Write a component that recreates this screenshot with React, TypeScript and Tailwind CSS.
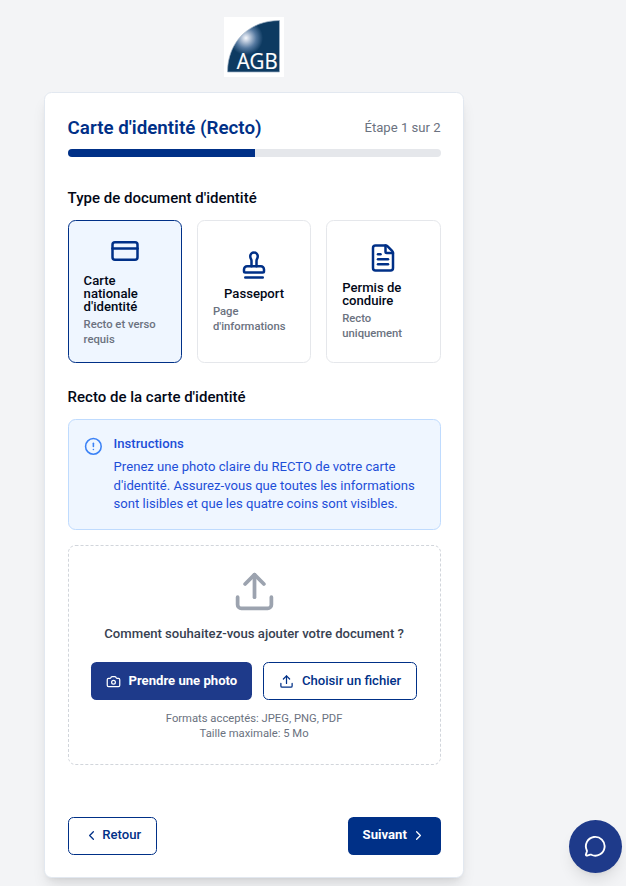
import React from "react";
import {
  Camera,
  ChevronLeft,
  ChevronRight,
  CircleAlert,
  CreditCard,
  FileText,
  MessageCircle,
  Stamp,
  Upload,
  type LucideIcon,
} from "lucide-react";

type DocType = { icon: LucideIcon; title: string; detail: string; selected?: boolean };

const docTypes: DocType[] = [
  { icon: CreditCard, title: "Carte nationale d'identité", detail: "Recto et verso requis", selected: true },
  { icon: Stamp, title: "Passeport", detail: "Page d'informations" },
  { icon: FileText, title: "Permis de conduire", detail: "Recto uniquement" },
];

function Logo() {
  return (
    <svg width="60" height="60" viewBox="0 0 60 60" role="img" aria-label="AGB">
      <defs>
        <radialGradient id="glow" gradientUnits="userSpaceOnUse" cx="22" cy="21" r="17">
          <stop offset="0" stopColor="#f5f8fc" />
          <stop offset="0.2" stopColor="#c3cfe0" />
          <stop offset="0.6" stopColor="#54789f" />
          <stop offset="1" stopColor="#0d3a61" />
        </radialGradient>
      </defs>
      <rect width="60" height="60" fill="#fff" />
      <path d="M55.5 3.5V55H3.5C3.5 25 25 3.5 55.5 3.5Z" fill="url(#glow)" stroke="#9fb1c6" strokeWidth="0.7" />
      <text x="12.7" y="52" fill="#fff" stroke="#fff" strokeWidth="0.2" fontSize="22" textLength="41" lengthAdjust="spacingAndGlyphs" fontFamily="'Open Sans', sans-serif">
        AGB
      </text>
    </svg>
  );
}

function DocCard({ icon: Icon, title, detail, selected }: DocType) {
  return (
    <button
      className={`flex flex-col items-center justify-center rounded-[7.5px] border p-4 text-left ${
        selected ? "border-[#003087] bg-[#eff6ff]" : "border-[#e5e7eb] bg-white"
      }`}
    >
      <Icon size={30} className="mb-2 shrink-0 text-[#003087]" />
      <span className="text-[13.125px] leading-none font-medium text-[#020817]">{title}</span>
      <span className="mt-1 text-[11.25px] leading-[15px] font-medium text-[#6b7280]">{detail}</span>
    </button>
  );
}

export default function App() {
  return (
    <div className="h-[886px] overflow-hidden bg-[#f3f4f6] pl-[44.1px] text-[13.125px] leading-[18.75px] antialiased [--spacing:3.75px] font-['Roboto',sans-serif]">
      <main className="flex w-[420px] flex-col items-center pt-[16.95px]">
        <Logo />
        <section className="mt-4 w-full rounded-[7.5px] border border-[#e2e8f0] bg-white p-6 shadow-lg">
          <header className="mb-8">
            <div className="mb-2 flex items-center justify-between">
              <h1 className="text-[18.75px] leading-[26.25px] font-semibold text-[#003087]">Carte d'identité (Recto)</h1>
              <span className="text-[#6b7280]">Étape 1 sur 2</span>
            </div>
            <div className="h-2 overflow-hidden rounded-full bg-[#e5e7eb]">
              <div className="h-full w-[50.15%] bg-[#003087]" />
            </div>
          </header>

          <h2 className="mb-3 text-[15px] leading-[22.5px] font-medium text-[#020817]">Type de document d'identité</h2>
          <div className="mb-6 grid grid-cols-3 gap-4">
            {docTypes.map((doc) => (
              <DocCard key={doc.title} {...doc} />
            ))}
          </div>

          <h2 className="mb-3 text-[15px] leading-[22.5px] font-medium text-[#020817]">Recto de la carte d'identité</h2>
          <div className="mb-4 flex rounded-[7.5px] border border-[#bfdbfe] bg-[#eff6ff] p-4 text-[#1d4ed8]">
            <CircleAlert size={18.75} className="mt-0.5 mr-3 shrink-0 text-[#3b82f6]" />
            <div>
              <h3 className="mb-1 font-medium">Instructions</h3>
              <p>
                Prenez une photo claire du RECTO de votre carte d'identité. Assurez-vous que toutes les informations sont
                lisibles et que les quatre coins sont visibles.
              </p>
            </div>
          </div>

          <div className="flex flex-col items-center rounded-[7.5px] border border-dashed border-[#d1d5db] p-6">
            <Upload size={45} className="mb-3 text-[#9ca3af]" />
            <p className="mb-5 font-medium text-[#374151]">Comment souhaitez-vous ajouter votre document ?</p>
            <div className="flex gap-3">
              <button className="flex h-10 items-center rounded-[5.5px] bg-[#1e3a8a] px-4 font-bold whitespace-nowrap text-white">
                <Camera size={15} className="mr-2" />
                Prendre une photo
              </button>
              <button className="flex h-10 items-center rounded-[5.5px] border border-[#003087] px-4 font-medium whitespace-nowrap text-[#003087]">
                <Upload size={15} className="mr-2" />
                Choisir un fichier
              </button>
            </div>
            <p className="mt-3 text-center text-[11.25px] leading-[15px] text-[#6b7280]">
              Formats acceptés: JPEG, PNG, PDF
              <br />
              Taille maximale: 5 Mo
            </p>
          </div>

          <footer className="mt-14 flex justify-between">
            <button className="flex h-10 items-center rounded-[5.5px] border border-[#003087] px-4 font-medium text-[#003087]">
              <ChevronLeft size={15} className="mr-1" />
              Retour
            </button>
            <button className="flex h-10 items-center rounded-[5.5px] bg-[#003087] px-4 font-bold text-white">
              Suivant
              <ChevronRight size={15} className="ml-1" />
            </button>
          </footer>
        </section>
      </main>
      <button
        aria-label="Chat"
        className="fixed top-[820px] right-[4.5px] flex size-14 items-center justify-center rounded-full bg-[#1e3a8a] text-white shadow-lg"
      >
        <MessageCircle size={22.5} />
      </button>
    </div>
  );
}
